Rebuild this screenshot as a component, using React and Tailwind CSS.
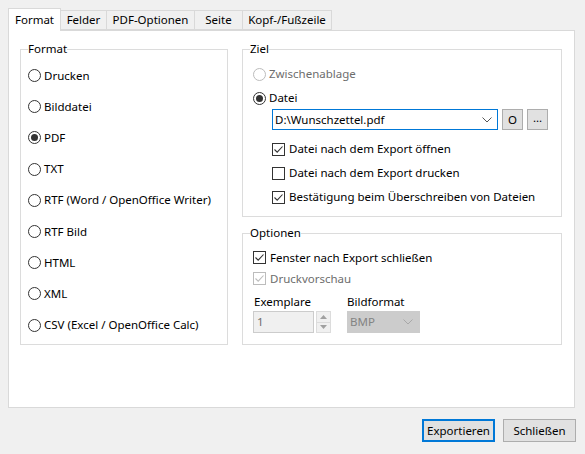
import React from 'react';

const font = { fontFamily: '"Noto Sans", "Open Sans", sans-serif' };

const Radio = ({ checked, disabled }) => (
  <span
    className={`flex items-center justify-center w-[13px] h-[13px] rounded-full border bg-white shrink-0 ${
      disabled ? 'border-[#bcbcbc]' : 'border-[#333333]'
    }`}
  >
    {checked && <span className="w-[7px] h-[7px] rounded-full bg-[#333333]" />}
  </span>
);

const Checkbox = ({ checked, disabled }) => (
  <span
    className={`flex items-center justify-center w-[13px] h-[13px] border bg-white shrink-0 ${
      disabled ? 'border-[#bcbcbc]' : 'border-[#333333]'
    }`}
  >
    {checked && (
      <svg width="11" height="11" viewBox="0 0 11 11">
        <path d="M1.5 5.5 L4.2 8.2 L9.5 2.5" fill="none" stroke={disabled ? '#bcbcbc' : '#333333'} strokeWidth="1.1" />
      </svg>
    )}
  </span>
);

const Group = ({ title, className, children }) => (
  <div className={`relative border border-[#dcdcdc] ${className}`}>
    <span className="absolute -top-[9px] left-[7px] bg-white leading-[16px]">{title}</span>
    {children}
  </div>
);

const formats = [
  'Drucken',
  'Bilddatei',
  'PDF',
  'TXT',
  'RTF (Word / OpenOffice Writer)',
  'RTF Bild',
  'HTML',
  'XML',
  'CSV (Excel / OpenOffice Calc)',
];

const tabs = ['Felder', 'PDF-Optionen', 'Seite', 'Kopf-/Fußzeile'];
const tabWidths = ['w-[46px]', 'w-[88px]', 'w-[48px]', 'w-[89px]'];

const Chevron = ({ color }) => (
  <svg width="10" height="6" viewBox="0 0 10 6">
    <path d="M0.5 0.5 L5 5 L9.5 0.5" fill="none" stroke={color} strokeWidth="1" />
  </svg>
);

export default function App() {
  return (
    <div className="w-[585px] h-[454px] bg-[#f0f0f0] text-[11.5px] text-black overflow-hidden" style={font}>
      <div className="pt-[8px] px-[8px]">
        <div className="flex items-end h-[22px]">
          <div className="relative z-10 -mb-px w-[53px] h-[23px] bg-white border border-b-0 border-[#d9d9d9] flex items-start justify-center pt-[3px] leading-[16px]">
            Format
          </div>
          {tabs.map((t, i) => (
            <div
              key={t}
              className={`${tabWidths[i]} h-[20px] bg-[#f0f0f0] border border-l-0 border-[#d9d9d9] flex items-center justify-center leading-[16px]`}
            >
              {t}
            </div>
          ))}
        </div>
        <div className="w-[567px] h-[378px] bg-white border border-[#d9d9d9] pl-[11px] pt-[18px] flex gap-[14px]">
          <Group title="Format" className="w-[208px] h-[296px]">
            <div className="pt-[10px] pl-[7px]">
              {formats.map((f) => (
                <div key={f} className="h-[31.2px] flex items-center gap-[3px] leading-[16px]">
                  <Radio checked={f === 'PDF'} />
                  <span>{f}</span>
                </div>
              ))}
            </div>
          </Group>

          <div className="w-[320px] flex flex-col">
            <Group title="Ziel" className="h-[168px]">
              <div className="pt-[14px] pl-[10px] flex flex-col">
                <div className="h-[20px] flex items-center gap-[3px] text-[#6d6d6d]">
                  <Radio disabled />
                  <span>Zwischenablage</span>
                </div>
                <div className="h-[20px] mt-[4px] flex items-center gap-[3px]">
                  <Radio checked />
                  <span>Datei</span>
                </div>
                <div className="pl-[19px] flex items-center gap-[4px] mt-px">
                  <div className="w-[226px] h-[21px] border border-[#0078d7] bg-white flex items-center justify-between pl-[2px] pr-[5px]">
                    <span>D:\Wunschzettel.pdf</span>
                    <Chevron color="#555555" />
                  </div>
                  <div className="w-[21px] h-[21px] bg-[#e1e1e1] border border-[#adadad] flex items-center justify-center">O</div>
                  <div className="w-[21px] h-[21px] bg-[#e1e1e1] border border-[#adadad] flex items-center justify-center leading-none pb-[3px]">...</div>
                </div>
                <div className="pl-[19px] mt-[7px] flex flex-col">
                  {[
                    ['Datei nach dem Export öffnen', true],
                    ['Datei nach dem Export drucken', false],
                    ['Bestätigung beim Überschreiben von Dateien', true],
                  ].map(([l, c]) => (
                    <div key={l} className="h-[24px] flex items-center gap-[4px]">
                      <Checkbox checked={c} />
                      <span>{l}</span>
                    </div>
                  ))}
                </div>
              </div>
            </Group>

            <Group title="Optionen" className="h-[112px] mt-[16px]">
              <div className="pt-[13px] pl-[10px] flex flex-col">
                <div className="h-[21px] flex items-center gap-[4px]">
                  <Checkbox checked />
                  <span>Fenster nach Export schließen</span>
                </div>
                <div className="h-[21px] flex items-center gap-[4px] text-[#6d6d6d]">
                  <Checkbox checked disabled />
                  <span>Druckvorschau</span>
                </div>
                <div className="flex gap-[16px] mt-[5px]">
                  <div className="flex flex-col">
                    <span className="h-[17px] leading-[16px] pl-px">Exemplare</span>
                    <div className="flex gap-[2px]">
                      <div className="w-[61px] h-[22px] bg-[#f0f0f0] border border-[#cccccc] flex items-center pl-[3px] text-[#6d6d6d]">1</div>
                      <div className="w-[15px] h-[22px] flex flex-col border border-[#dcdcdc] bg-[#f0f0f0]">
                        <div className="flex-1 flex items-center justify-center border-b border-[#dcdcdc]">
                          <svg width="7" height="4" viewBox="0 0 7 4"><path d="M0 4 L3.5 0 L7 4 Z" fill="#a0a0a0" /></svg>
                        </div>
                        <div className="flex-1 flex items-center justify-center">
                          <svg width="7" height="4" viewBox="0 0 7 4"><path d="M0 0 L3.5 4 L7 0 Z" fill="#a0a0a0" /></svg>
                        </div>
                      </div>
                    </div>
                  </div>
                  <div className="flex flex-col">
                    <span className="h-[17px] leading-[16px]">Bildformat</span>
                    <div className="w-[73px] h-[22px] bg-[#cccccc] border border-[#cccccc] flex items-center justify-between pl-[2px] pr-[6px] text-[#838383]">
                      <span>BMP</span>
                      <Chevron color="#a8a8a8" />
                    </div>
                  </div>
                </div>
              </div>
            </Group>
          </div>
        </div>
      </div>

      <div className="flex justify-end gap-[8px] pr-[9px] mt-[11px]">
        <div className="w-[73px] h-[23px] bg-[#e1e1e1] border-2 border-[#0078d7] flex items-center justify-center">Exportieren</div>
        <div className="w-[73px] h-[23px] bg-[#e1e1e1] border border-[#adadad] flex items-center justify-center">Schließen</div>
      </div>
    </div>
  );
}
